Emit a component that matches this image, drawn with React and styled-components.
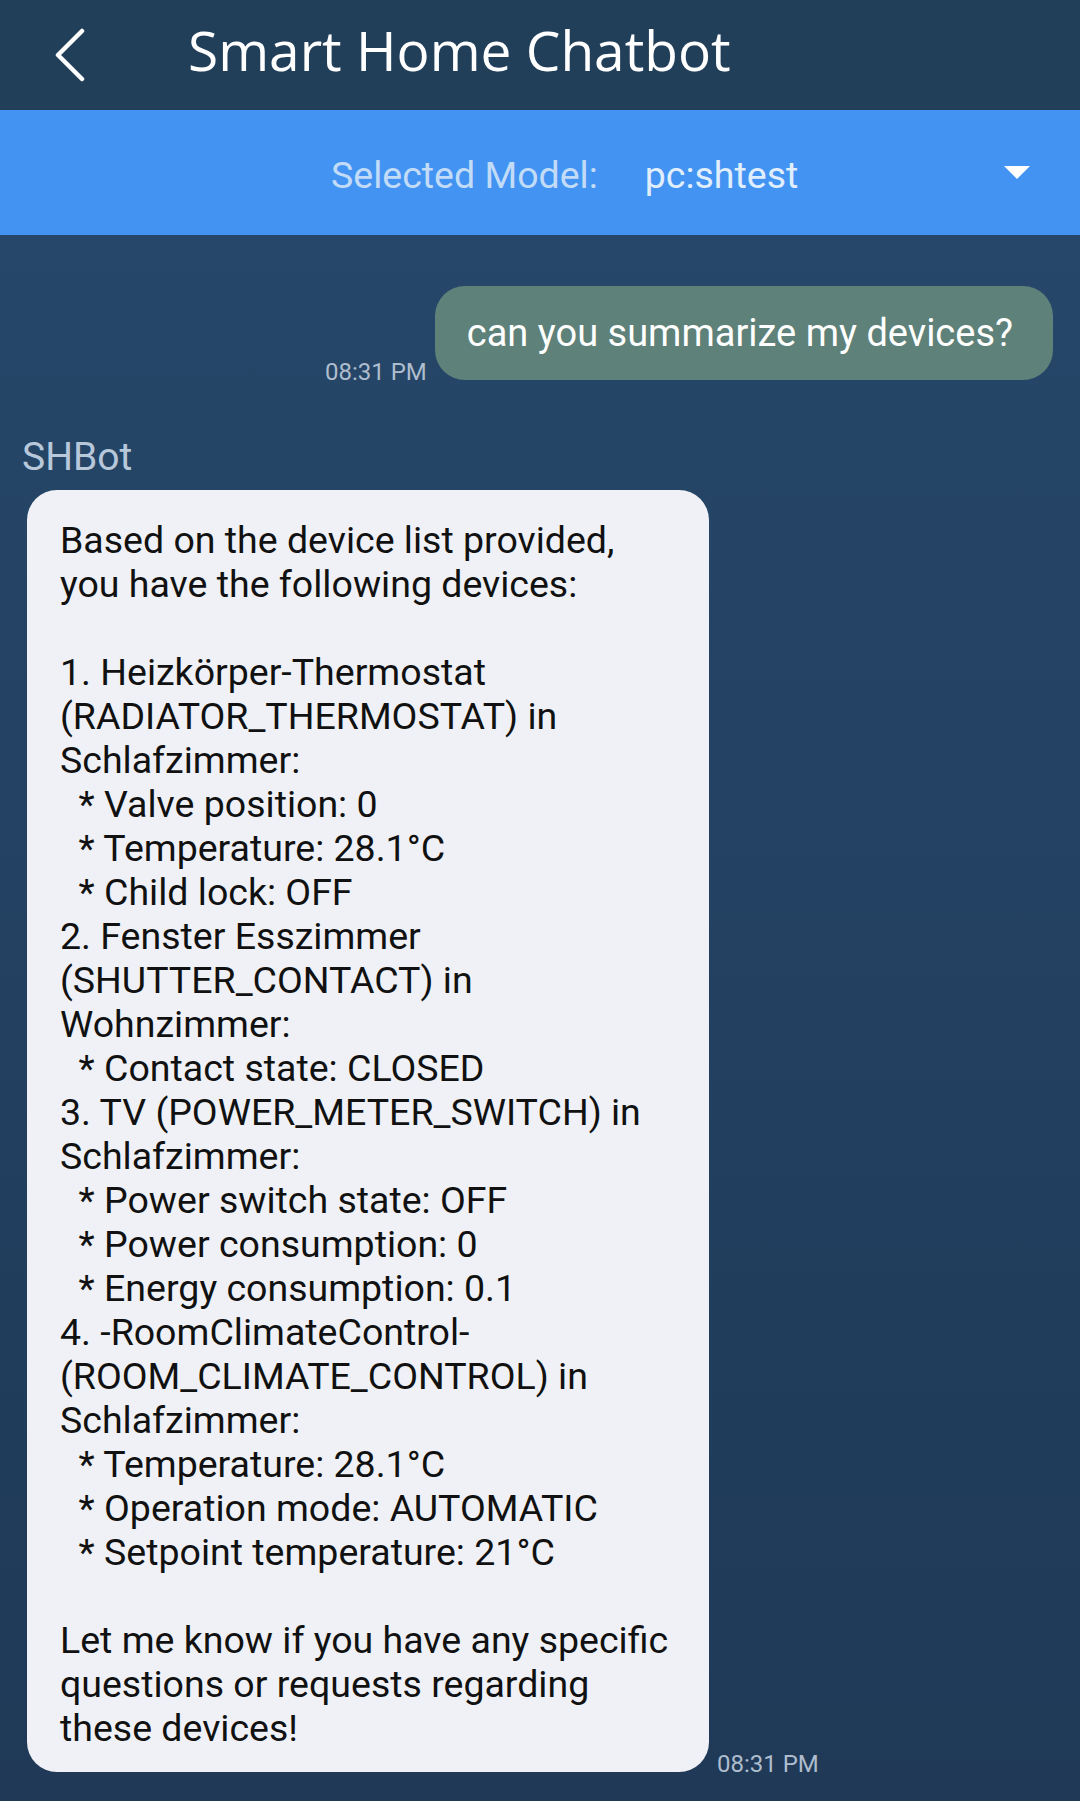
import React from "react"
import styled, { createGlobalStyle } from "styled-components"

const GlobalStyle = createGlobalStyle`
  html, body {
    margin: 0;
    padding: 0;
  }
  body {
    background: #1f3957;
    font-family: Roboto, "Noto Sans", Arial, sans-serif;
  }
`

const Page = styled.div`
  width: 1080px;
  min-height: 1801px;
  display: flex;
  flex-direction: column;
  background: linear-gradient(180deg, #27496c 0%, #1f3957 100%);
`

const Header = styled.header`
  height: 110px;
  flex-shrink: 0;
  display: flex;
  align-items: center;
  background: #223f5a;
`

const BackButton = styled.button`
  width: 40px;
  height: 60px;
  margin-left: 50px;
  padding: 0;
  border: none;
  background: transparent;
  display: flex;
  align-items: center;
  justify-content: center;
  cursor: pointer;
`

const Title = styled.h1`
  margin: 0 0 0 98px;
  font-family: "Open Sans", Roboto, sans-serif;
  font-size: 55px;
  font-weight: 500;
  line-height: 1;
  color: #ffffff;
  padding-bottom: 12px;
`

const ModelBar = styled.div`
  height: 125px;
  flex-shrink: 0;
  display: flex;
  align-items: center;
  background: #4394f2;
  font-size: 37.5px;
  padding: 4px 0 0 331px;
  box-sizing: border-box;
`

const ModelLabel = styled.span`
  color: #c2dcf8;
`

const ModelValue = styled.span`
  color: #e0eefd;
  margin-left: 47px;
`

const Caret = styled.span`
  margin-left: auto;
  margin-right: 50px;
  margin-bottom: 4px;
  width: 0;
  height: 0;
  border-left: 13px solid transparent;
  border-right: 13px solid transparent;
  border-top: 13px solid #ffffff;
`

const ChatList = styled.main`
  display: flex;
  flex-direction: column;
  padding: 51px 27px 0 27px;
`

const Row = styled.div`
  display: flex;
  align-items: flex-end;
  gap: 8px;
  justify-content: ${p => (p.$mine ? "flex-end" : "flex-start")};
`

const Time = styled.span`
  font-size: 24px;
  line-height: 1;
  color: #aebdcd;
  margin-bottom: -4px;
  white-space: nowrap;
`

const UserBubble = styled.div`
  height: 94px;
  display: flex;
  align-items: center;
  padding: 0 40px 0 32px;
  border-radius: 30px;
  background: #5e8179;
  color: #ffffff;
  font-size: 38px;
`

const Sender = styled.div`
  margin: 58px 0 13px -5px;
  font-size: 39px;
  line-height: 1;
  color: #b7c8da;
`

const BotBubble = styled.div`
  width: 682px;
  box-sizing: border-box;
  padding: 28px 33px 22px;
  border-radius: 30px;
  background: #eff1f6;
  color: #111111;
  font-size: 37.5px;
  line-height: 44px;
  white-space: pre;
`

const reply = [
  "Based on the device list provided,",
  "you have the following devices:",
  "",
  "1. Heizkörper-Thermostat",
  "(RADIATOR_THERMOSTAT) in",
  "Schlafzimmer:",
  "  * Valve position: 0",
  "  * Temperature: 28.1°C",
  "  * Child lock: OFF",
  "2. Fenster Esszimmer",
  "(SHUTTER_CONTACT) in",
  "Wohnzimmer:",
  "  * Contact state: CLOSED",
  "3. TV (POWER_METER_SWITCH) in",
  "Schlafzimmer:",
  "  * Power switch state: OFF",
  "  * Power consumption: 0",
  "  * Energy consumption: 0.1",
  "4. -RoomClimateControl-",
  "(ROOM_CLIMATE_CONTROL) in",
  "Schlafzimmer:",
  "  * Temperature: 28.1°C",
  "  * Operation mode: AUTOMATIC",
  "  * Setpoint temperature: 21°C",
  "",
  "Let me know if you have any specific",
  "questions or requests regarding",
  "these devices!",
].join("\n")

const App = () => {
  return (
    <Page>
      <GlobalStyle />
      <Header>
        <BackButton aria-label="back">
          <svg width="34" height="54" viewBox="0 0 34 54">
            <polyline points="29,3 5,27 29,51" fill="none" stroke="#fff" strokeWidth="4.5" strokeLinecap="round" strokeLinejoin="round" />
          </svg>
        </BackButton>
        <Title>Smart Home Chatbot</Title>
      </Header>

      <ModelBar>
        <ModelLabel>Selected Model:</ModelLabel>
        <ModelValue>pc:shtest</ModelValue>
        <Caret />
      </ModelBar>

      <ChatList>
        <Row $mine>
          <Time>08:31 PM</Time>
          <UserBubble>can you summarize my devices?</UserBubble>
        </Row>

        <Sender>SHBot</Sender>
        <Row>
          <BotBubble>{reply}</BotBubble>
          <Time>08:31 PM</Time>
        </Row>
      </ChatList>
    </Page>
  )
}

export default App
